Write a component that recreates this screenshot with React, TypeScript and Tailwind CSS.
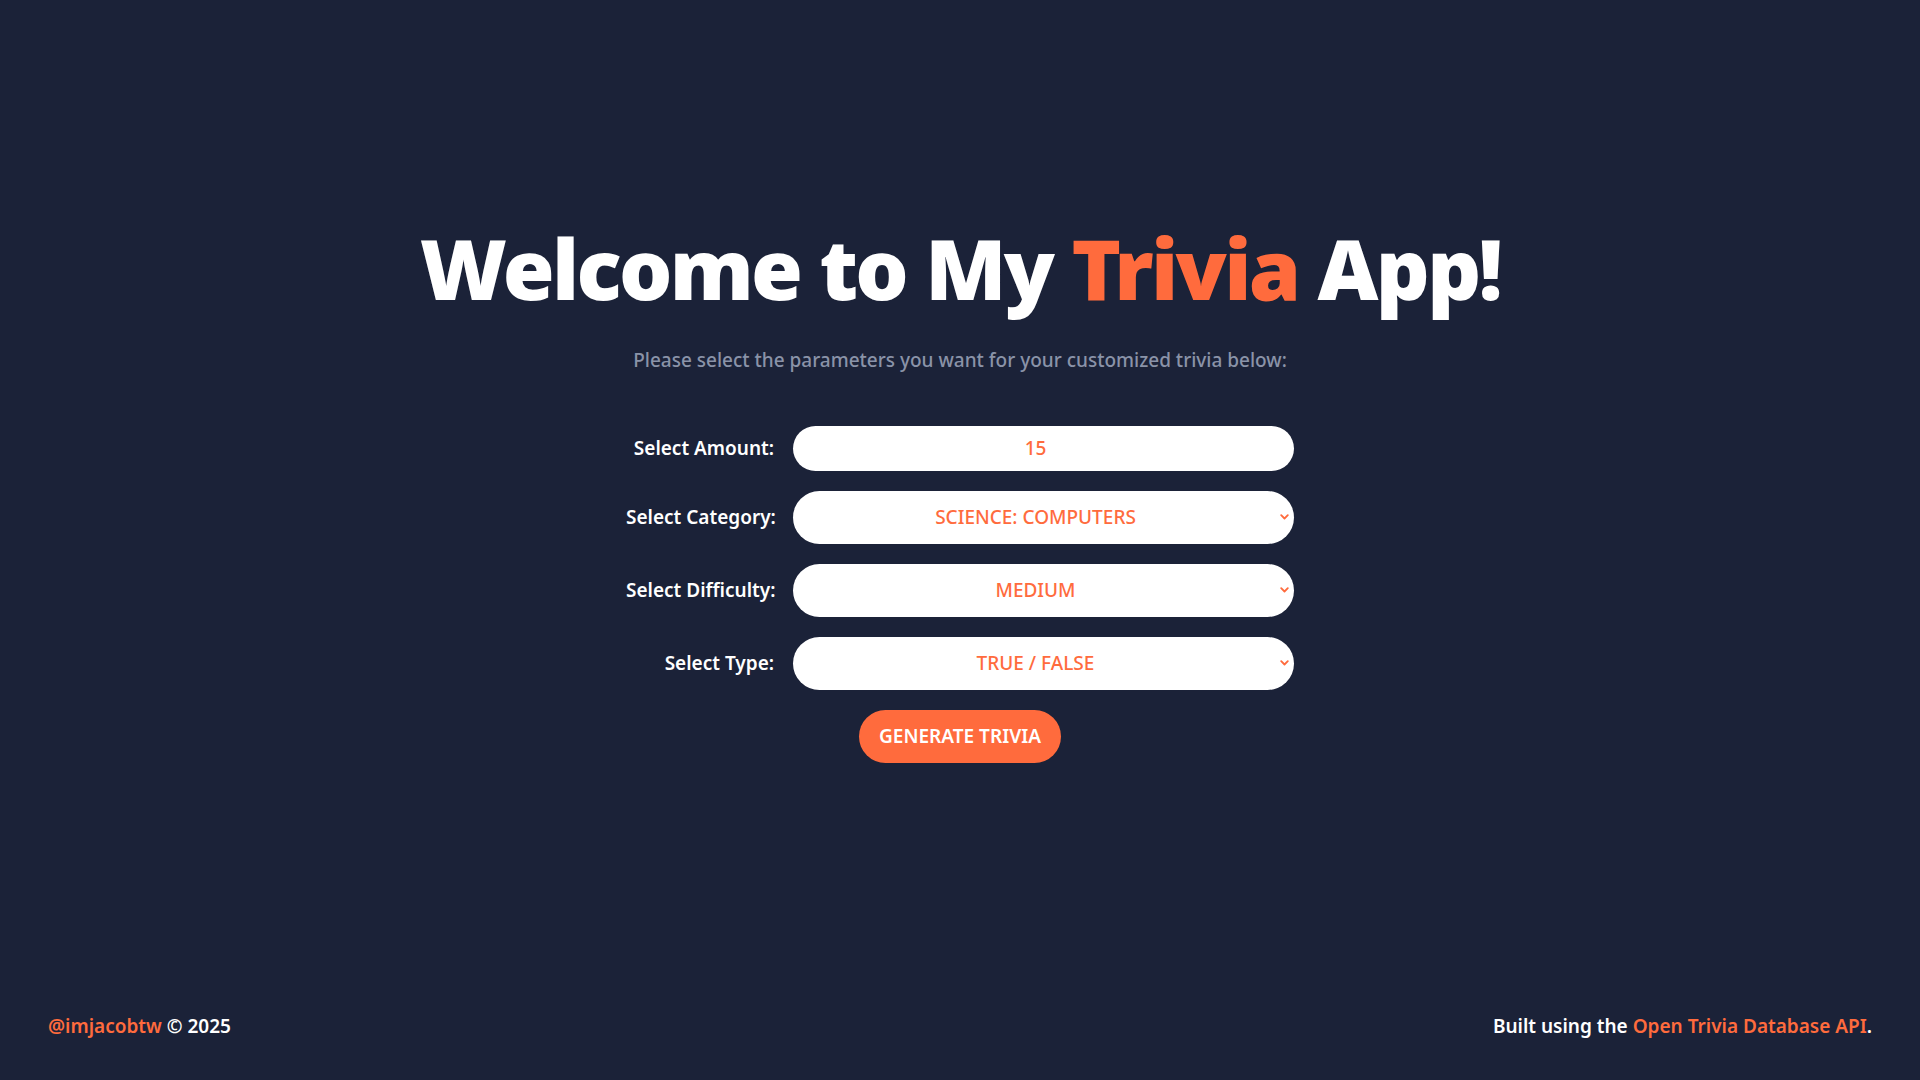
import React from "react";

const Chevron = () => (
  <svg
    className="pointer-events-none absolute right-[5px] top-1/2 -translate-y-1/2"
    width="9"
    height="6"
    viewBox="0 0 9 6"
    fill="none"
  >
    <path d="M1.2 1.2L4.5 4.5L7.8 1.2" stroke="#ff6b3d" strokeWidth="1.8" strokeLinecap="round" strokeLinejoin="round" />
  </svg>
);

const SelectField = ({ value }: { value: string }) => (
  <div className="relative">
    <div className="flex h-[53px] w-[501px] items-center justify-center rounded-full bg-white pr-[16px] text-[19px] font-medium uppercase text-[#ff6b3d]">
      {value}
    </div>
    <Chevron />
  </div>
);

const App = () => {
  return (
    <div
      className="flex min-h-screen flex-col bg-[#1b2238] text-white"
      style={{ fontFamily: '"Noto Sans", "Open Sans", sans-serif' }}
    >
      <main className="flex flex-1 flex-col items-center pt-[226px]">
        <h1 className="text-[84px] font-black leading-none tracking-[-2.7px]">
          Welcome to My <span className="text-[#ff6b3d]">Trivia</span> App!
        </h1>
        <p className="mt-[36px] text-[19px] font-medium text-[#8a93a8]">
          Please select the parameters you want for your customized trivia below:
        </p>

        <div className="mt-[51px] grid grid-cols-[148px_501px] items-center gap-x-[19px] gap-y-[20px]">
          <label className="text-right text-[19px] font-semibold">Select Amount:</label>
          <div className="flex h-[45px] w-[501px] items-center justify-center rounded-full bg-white pr-[16px] text-[19px] font-medium text-[#ff6b3d]">
            15
          </div>

          <label className="whitespace-nowrap text-right text-[19px] font-semibold">Select Category:</label>
          <SelectField value="Science: Computers" />

          <label className="whitespace-nowrap text-right text-[19px] font-semibold">Select Difficulty:</label>
          <SelectField value="Medium" />

          <label className="text-right text-[19px] font-semibold">Select Type:</label>
          <SelectField value="True / False" />
        </div>

        <button className="mt-[20px] h-[53px] w-[202px] rounded-full bg-[#ff6b3d] text-[19px] font-semibold uppercase text-white">
          Generate Trivia
        </button>
      </main>

      <footer className="flex items-center justify-between px-[48px] pb-[40px] text-[19px] font-semibold">
        <p>
          <span className="text-[#ff6b3d]">@imjacobtw</span> © 2025
        </p>
        <p>
          Built using the <span className="text-[#ff6b3d]">Open Trivia Database API</span>.
        </p>
      </footer>
    </div>
  );
};

export default App;
